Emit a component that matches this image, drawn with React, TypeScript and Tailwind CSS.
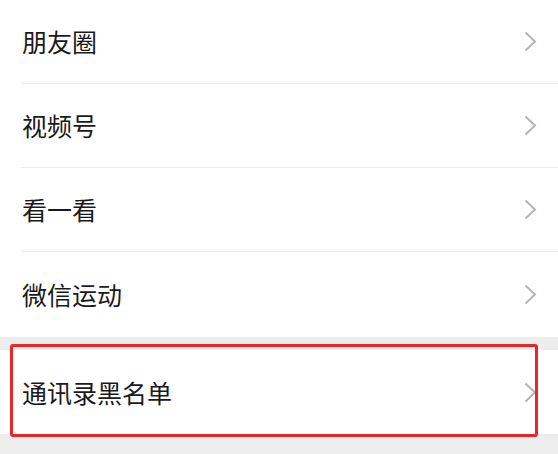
const items = ['朋友圈', '视频号', '看一看', '微信运动'];

function Chevron() {
  return (
    <svg width="13" height="21" viewBox="0 0 13 21" fill="none" className="shrink-0">
      <polyline points="1.5,1.5 11,10.5 1.5,19.5" stroke="#b4b4b4" strokeWidth="2" strokeLinejoin="miter" />
    </svg>
  );
}

function Row({ label, last }: { label: string; last?: boolean }) {
  return (
    <div className="bg-white">
      <div className={`flex items-center justify-between pl-[22px] pr-[21px] ${last ? 'h-[85px]' : 'h-[83px]'}`}>
        <span className="text-[25px] leading-none text-[#1a1a1a]">{label}</span>
        <Chevron />
      </div>
      {!last && <div className="ml-[21px] h-px bg-[#ececec]" />}
    </div>
  );
}

export default function App() {
  return (
    <div
      className="w-[558px] h-[454px] overflow-hidden bg-[#ededed]"
      style={{ fontFamily: '"Noto Sans CJK SC", "Noto Sans", sans-serif' }}
    >
      {items.map((label, i) => (
        <Row key={label} label={label} last={i === items.length - 1} />
      ))}

      <div className="relative mt-[13px]">
        <div className="flex h-[84px] items-center justify-between bg-white pl-[22px] pr-[21px]">
          <span className="text-[25px] leading-none text-[#1a1a1a]">通讯录黑名单</span>
          <Chevron />
        </div>
        {/* red highlight drawn over the row */}
        <div className="pointer-events-none absolute left-[10px] top-[-6px] h-[93px] w-[528px] rounded-[3px] border-[3px] border-[#e8272b]" />
      </div>
    </div>
  );
}
